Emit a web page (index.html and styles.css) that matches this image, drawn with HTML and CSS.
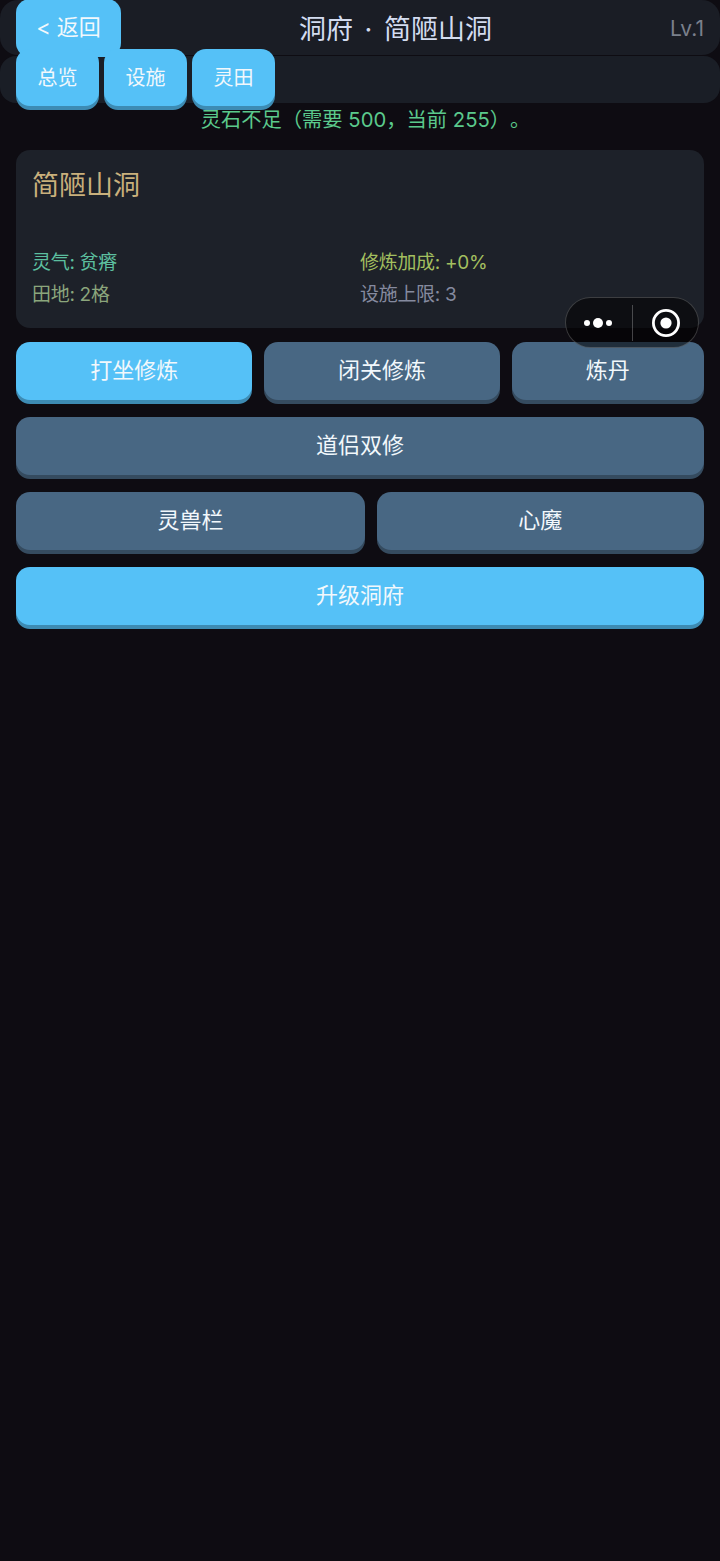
FILE: index.html
```html
<!DOCTYPE html>
<html lang="zh-CN">
<head>
<meta charset="utf-8">
<title>洞府</title>
<link rel="stylesheet" href="styles.css">
</head>
<body>
<div class="page">
  <header class="header">
    <button class="btn btn-back">&lt; 返回</button>
    <h1 class="header-title">洞府 · 简陋山洞</h1>
    <span class="header-level">Lv.1</span>
  </header>
  <nav class="tabs">
    <button class="btn btn-tab">总览</button>
    <button class="btn btn-tab">设施</button>
    <button class="btn btn-tab">灵田</button>
  </nav>
  <p class="message">灵石不足（需要 500，当前 255）。</p>
  <section class="card">
    <h2 class="card-title">简陋山洞</h2>
    <div class="stats">
      <span class="stat stat-aura">灵气: 贫瘠</span>
      <span class="stat stat-bonus">修炼加成: +0%</span>
      <span class="stat stat-field">田地: 2格</span>
      <span class="stat stat-limit">设施上限: 3</span>
    </div>
  </section>
  <div class="actions">
    <div class="row">
      <button class="btn btn-action btn-primary">打坐修炼</button>
      <button class="btn btn-action btn-muted">闭关修炼</button>
      <button class="btn btn-action btn-muted">炼丹</button>
    </div>
    <div class="row">
      <button class="btn btn-action btn-muted">道侣双修</button>
    </div>
    <div class="row">
      <button class="btn btn-action btn-muted">灵兽栏</button>
      <button class="btn btn-action btn-muted">心魔</button>
    </div>
    <div class="row">
      <button class="btn btn-action btn-primary">升级洞府</button>
    </div>
  </div>
  <div class="capsule">
    <svg class="capsule-dots" viewBox="0 0 30 12" aria-hidden="true">
      <circle cx="4" cy="6" r="3"/><circle cx="15" cy="6" r="5"/><circle cx="26" cy="6" r="3"/>
    </svg>
    <span class="capsule-sep"></span>
    <svg class="capsule-target" viewBox="0 0 30 30" aria-hidden="true">
      <circle cx="15" cy="15" r="12.6" fill="none" stroke="#fff" stroke-width="2.8"/><circle cx="15" cy="15" r="5.6" fill="#fff"/>
    </svg>
  </div>
</div>
</body>
</html>
```
FILE: styles.css
```css
* { box-sizing: border-box; }
html, body { margin: 0; padding: 0; }
body {
  background: #0e0c12;
  font-family: Inter, "Noto Sans CJK SC", sans-serif;
  color: #fff;
  text-spacing-trim: space-all;
}
.page {
  position: relative;
  width: 720px;
  height: 1561px;
  overflow: hidden;
}
.btn {
  border: 0;
  font-family: inherit;
  color: #f2f8fc;
  background: #55c1f7;
  box-shadow: 0 4px 0 #3d8bb3;
  border-radius: 14px;
  padding: 0;
}
.header {
  display: flex;
  align-items: center;
  height: 55px;
  padding: 0 16px;
  background: #1a1d25;
  border-radius: 18px;
}
.btn-back {
  flex: none;
  width: 105px;
  height: 58px;
  padding-bottom: 6px;
  font-size: 22px;
  box-shadow: none;
}
.header-title {
  margin: 0;
  flex: 1;
  text-align: center;
  font-size: 27px;
  font-weight: 400;
  word-spacing: 4px;
  color: #d3dcf0;
}
.header-level {
  flex: none;
  padding-top: 2px;
  font-size: 21px;
  color: #7b808c;
}
.tabs {
  display: flex;
  align-items: center;
  gap: 5px;
  height: 47px;
  margin-top: 1px;
  padding: 0 16px 4px;
  background: #1a1e26;
  border-radius: 16px;
}
.btn-tab {
  flex: none;
  width: 83px;
  height: 57px;
  padding-bottom: 3px;
  font-size: 20px;
}
.message {
  margin: 3px 0 0;
  padding-left: 11px;
  height: 27px;
  line-height: 27px;
  text-align: center;
  font-size: 20.3px;
  color: #5bc98c;
}
.card {
  height: 178px;
  margin: 17px 16px 0;
  padding: 17px 16px 0;
  background: #1d2129;
  border-radius: 14px;
}
.card-title {
  margin: 0;
  height: 38px;
  line-height: 38px;
  font-size: 27px;
  font-weight: 400;
  color: #c9b07c;
}
.stats {
  display: grid;
  grid-template-columns: 1fr 1fr;
  row-gap: 4px;
  margin-top: 44px;
}
.stat {
  height: 28px;
  line-height: 28px;
  font-size: 19px;
  letter-spacing: -0.3px;
}
.stat-aura { color: #5cbf9f; }
.stat-bonus { color: #a3bf5f; }
.stat-field { color: #8ba67c; }
.stat-limit { color: #858a9f; }
.actions {
  display: flex;
  flex-direction: column;
  gap: 13px;
  margin: 14px 16px 0;
}
.row {
  display: flex;
  gap: 11.5px;
  height: 62px;
}
.btn-action {
  flex: 1 1 auto;
  height: 58px;
  padding-bottom: 7px;
  font-size: 22px;
}
.btn-muted {
  background: #486783;
  box-shadow: 0 4px 0 #354b5f;
}
.capsule {
  position: absolute;
  left: 565px;
  top: 297px;
  width: 134px;
  height: 51px;
  display: flex;
  align-items: center;
  border: 1px solid rgba(255, 255, 255, 0.2);
  border-radius: 26px;
  background: rgba(0, 0, 0, 0.55);
}
.capsule-dots {
  width: 30px;
  height: 12px;
  margin-left: 17px;
  fill: #fff;
}
.capsule-sep {
  width: 1px;
  height: 36px;
  margin-left: 19px;
  background: rgba(255, 255, 255, 0.25);
}
.capsule-target {
  width: 30px;
  height: 30px;
  margin-left: 18px;
}
```
